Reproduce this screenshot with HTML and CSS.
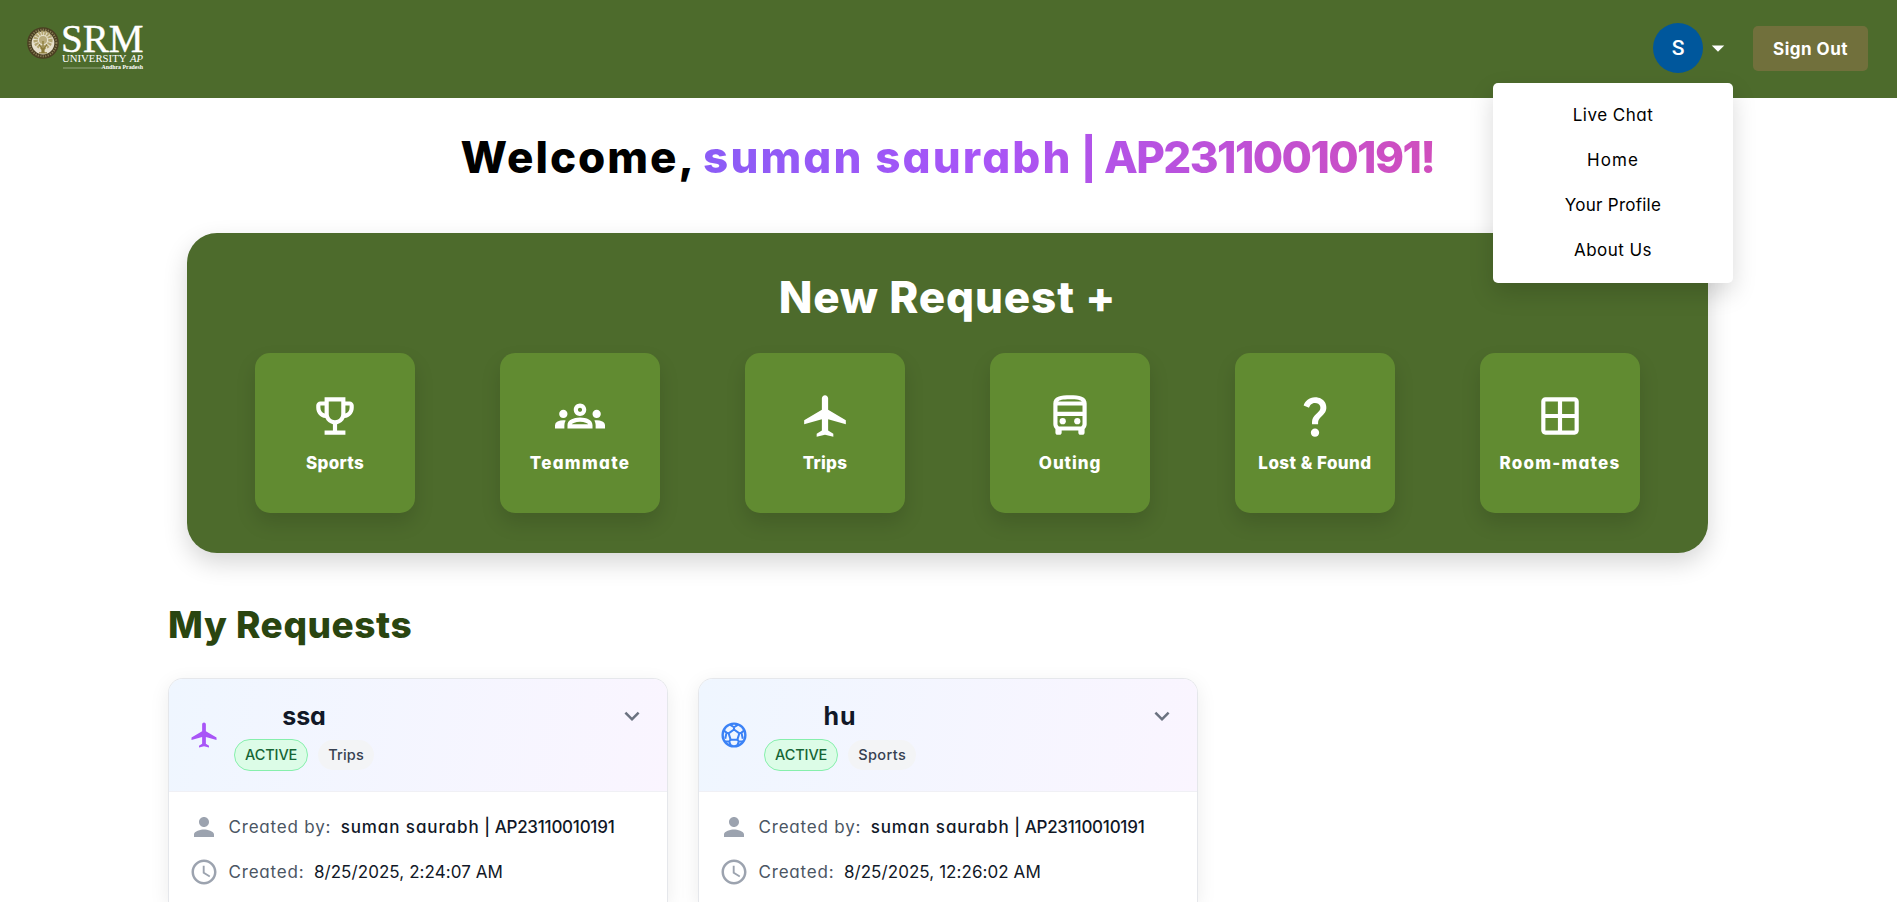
FILE: index.html
```html
<!DOCTYPE html>
<html lang="en">
<head>
<meta charset="utf-8">
<title>Dashboard</title>
<link rel="stylesheet" href="styles.css">
</head>
<body>
<svg class="sprite" aria-hidden="true">
  <symbol id="plane" viewBox="0 0 24 24"><path d="M22 16v-2l-8.5-5V3.5c0-.83-.67-1.5-1.5-1.5s-1.5.67-1.5 1.5V9L2 14v2l8.5-2.5V19L8 20.5V22l4-1 4 1v-1.5L13.5 19v-5.5L22 16z"/></symbol>
  <symbol id="chevron" viewBox="0 0 24 24"><path d="M16.59 8.59 12 13.17 7.41 8.59 6 10l6 6 6-6z"/></symbol>
  <symbol id="person" viewBox="0 0 24 24"><path d="M12 12c2.21 0 4-1.79 4-4s-1.79-4-4-4-4 1.79-4 4 1.79 4 4 4zm0 2c-2.67 0-8 1.34-8 4v2h16v-2c0-2.66-5.33-4-8-4z"/></symbol>
  <symbol id="clock" viewBox="0 0 24 24"><path d="M11.99 2C6.47 2 2 6.48 2 12s4.47 10 9.99 10C17.52 22 22 17.52 22 12S17.52 2 11.99 2zM12 20c-4.42 0-8-3.58-8-8s3.58-8 8-8 8 3.58 8 8-3.58 8-8 8zm.5-13H11v6l5.25 3.15.75-1.23-4.5-2.67z"/></symbol>
</svg>

<header class="topbar">
  <svg class="logo" viewBox="0 0 120 50" width="120" height="50">
    <circle cx="18" cy="19" r="15.8" fill="#4a3f22"/>
    <circle cx="18" cy="19" r="13.4" fill="none" stroke="#8a7d55" stroke-width="2" stroke-dasharray="1.2 1.3"/>
    <circle cx="18" cy="19" r="11.4" fill="#e6e0cb"/>
    <circle cx="18" cy="16" r="7.4" fill="none" stroke="#b3a570" stroke-width="4.4" stroke-dasharray="2 1"/>
    <circle cx="18" cy="16" r="4" fill="#b9ac7c"/>
    <path d="M17 28.5c.5-3 .3-5-3-8M19 28.5c-.5-3-.3-5 3-8M18 29V17M14 28.8h8" fill="none" stroke="#8a7a38" stroke-width="1.3"/>
    <text class="logo-serif logo-srm" x="36" y="28" font-size="40" textLength="82.500" lengthAdjust="spacingAndGlyphs">SRM</text>
    <text class="logo-serif" x="37" y="37.600" font-size="10.800" textLength="64.500" lengthAdjust="spacingAndGlyphs">UNIVERSITY</text>
    <text class="logo-serif" x="105" y="37.600" font-size="10.800" font-style="italic" textLength="13" lengthAdjust="spacingAndGlyphs">AP</text>
    <path d="M38 44h39" stroke="#93a67c" stroke-width="1.2"/>
    <text class="logo-serif" x="76.500" y="45.400" font-size="6.200" font-weight="700" textLength="41.500" lengthAdjust="spacingAndGlyphs">Andhra Pradesh</text>
  </svg>
  <div class="account">
    <div class="avatar">S</div>
    <svg class="caret" viewBox="0 0 24 24"><path d="m7 10 5 5 5-5z"/></svg>
    <button class="signout">Sign Out</button>
    <nav class="menu">
      <a class="ls-chat">Live Chat</a>
      <a class="ls-home">Home</a>
      <a class="ls-profile">Your Profile</a>
      <a class="ls-about">About Us</a>
    </nav>
  </div>
</header>

<main class="page">
  <h1 class="welcome"><span class="hello">Welcome,</span> <span class="name"><span class="person">suman saurabh</span><span class="bar"> | </span><span class="roll">AP23110010191!</span></span></h1>

  <section class="panel">
    <h2 class="panel-title">New Request +</h2>
    <div class="tiles">
      <a class="tile"><svg viewBox="0 0 24 24"><path d="M19 5h-2V3H7v2H5c-1.1 0-2 .9-2 2v1c0 2.550 1.920 4.630 4.390 4.940.63 1.500 1.980 2.630 3.610 2.960V19H7v2h10v-2h-4v-3.100c1.630-.33 2.980-1.460 3.610-2.960C19.080 12.630 21 10.550 21 8V7c0-1.100-.9-2-2-2zM5 8V7h2v3.820C5.840 10.400 5 9.300 5 8zm7 6c-1.650 0-3-1.350-3-3V5h6v6c0 1.650-1.350 3-3 3zm7-6c0 1.300-.84 2.400-2 2.820V7h2v1z"/></svg><span class="ls-sports">Sports</span></a>
      <a class="tile"><svg viewBox="0 0 24 24"><path d="M4 13c1.1 0 2-.9 2-2s-.9-2-2-2-2 .9-2 2 .9 2 2 2zm1.13 1.1c-.37-.06-.74-.1-1.13-.1-.99 0-1.93.21-2.78.58A2.01 2.01 0 0 0 0 16.43V18h4.5v-1.61c0-.83.23-1.61.63-2.29zM20 13c1.1 0 2-.9 2-2s-.9-2-2-2-2 .9-2 2 .9 2 2 2zm4 3.43c0-.81-.48-1.53-1.22-1.85A6.95 6.95 0 0 0 20 14c-.39 0-.76.04-1.13.1.4.68.63 1.46.63 2.29V18H24v-1.57zm-7.76-2.78c-1.17-.52-2.61-.9-4.24-.9-1.63 0-3.07.39-4.24.9A2.988 2.988 0 0 0 6 16.39V18h12v-1.61c0-1.18-.68-2.26-1.76-2.74zM8.07 16c.09-.23.13-.39.91-.69.97-.38 1.99-.56 3.02-.56s2.05.18 3.02.56c.77.3.81.46.91.69H8.07zM12 8c.55 0 1 .45 1 1s-.45 1-1 1-1-.45-1-1 .45-1 1-1m0-2c-1.66 0-3 1.34-3 3s1.34 3 3 3 3-1.34 3-3-1.34-3-3-3z"/></svg><span class="ls-team">Teammate</span></a>
      <a class="tile"><svg><use href="#plane"/></svg><span class="ls-trips">Trips</span></a>
      <a class="tile"><svg viewBox="0 0 24 24"><path d="M12 2c-4.42 0-8 .5-8 4v10c0 .88.39 1.67 1 2.22V20c0 .55.45 1 1 1h1c.55 0 1-.45 1-1v-1h8v1c0 .55.45 1 1 1h1c.55 0 1-.45 1-1v-1.78c.61-.55 1-1.34 1-2.22V6c0-3.5-3.58-4-8-4zm5.66 2.99H6.34C6.89 4.46 8.31 4 12 4s5.11.46 5.66.99zm.34 2V10H6V6.99h12zm-.34 9.74-.29.27H6.63l-.29-.27A.99.99 0 0 1 6 16v-4h12v4c0 .37-.21.62-.34.73z"/><circle cx="8.5" cy="14.5" r="1.5"/><circle cx="15.5" cy="14.5" r="1.5"/></svg><span class="ls-outing">Outing</span></a>
      <a class="tile"><svg viewBox="0 0 24 24"><path d="M11.07 12.85c.77-1.39 2.25-2.21 3.11-3.44.91-1.29.4-3.7-2.18-3.7-1.69 0-2.52 1.28-2.87 2.34L6.54 6.96C7.25 4.83 9.18 3 11.99 3c2.35 0 3.96 1.07 4.78 2.41.7 1.15 1.11 3.3.03 4.9-1.2 1.77-2.35 2.31-2.97 3.45-.25.46-.35.76-.35 2.24h-2.89c-.01-.78-.13-2.05.48-3.15zM14 20c0 1.1-.9 2-2 2s-2-.9-2-2 .9-2 2-2 2 .9 2 2z"/></svg><span class="ls-lost">Lost &amp; Found</span></a>
      <a class="tile"><svg viewBox="0 0 24 24"><path d="M19 3H5c-1.1 0-2 .9-2 2v14c0 1.1.9 2 2 2h14c1.1 0 2-.9 2-2V5c0-1.1-.9-2-2-2zm0 8h-6V5h6v6zm-8-6v6H5V5h6zm-6 8h6v6H5v-6zm8 6v-6h6v6h-6z"/></svg><span class="ls-room">Room-mates</span></a>
    </div>
  </section>

  <section class="requests">
    <h2 class="requests-title">My Requests</h2>
    <div class="cards">
      <article class="card">
        <div class="card-head">
          <svg class="kind trip"><use href="#plane"/></svg>
          <div class="card-info">
            <h3 class="ls-ssa">ssa</h3>
            <div class="badges"><span class="badge active">ACTIVE</span><span class="badge ls-btrips">Trips</span></div>
          </div>
          <svg class="toggle"><use href="#chevron"/></svg>
        </div>
        <div class="card-body">
          <div class="row"><svg><use href="#person"/></svg><span class="label">Created by:</span><span class="value owner"><span class="owner-name">suman saurabh</span> | <span class="owner-roll">AP23110010191</span></span></div>
          <div class="row"><svg><use href="#clock"/></svg><span class="label">Created:</span><span class="value">8/25/2025, 2:24:07 AM</span></div>
        </div>
      </article>
      <article class="card">
        <div class="card-head">
          <svg class="kind sport" viewBox="0 0 24 24"><g fill="none" stroke="currentColor" stroke-width="1.6" stroke-linejoin="round"><circle cx="12" cy="12" r="9.1" stroke-width="1.9"/><path d="m12 7.600 4.300 3.100-1.600 5h-5.400l-1.600-5z"/><path d="M12 7.600V5.800M16.300 10.700l1.700-.6M14.700 15.700l1.100 1.500M9.300 15.700l-1.100 1.500M7.700 10.700 6 10.100M8.700 3.700 12 5.800l3.300-2.100M20.300 8.200 18 10.100l1 4.900M19 17.200h-3.200l-1.200 3.300M5 17.200h3.200l1.200 3.300M3.700 8.200 6 10.100 5 15"/></g></svg>
          <div class="card-info">
            <h3 class="ls-hu">hu</h3>
            <div class="badges"><span class="badge active">ACTIVE</span><span class="badge ls-bsports">Sports</span></div>
          </div>
          <svg class="toggle"><use href="#chevron"/></svg>
        </div>
        <div class="card-body">
          <div class="row"><svg><use href="#person"/></svg><span class="label">Created by:</span><span class="value owner"><span class="owner-name">suman saurabh</span> | <span class="owner-roll">AP23110010191</span></span></div>
          <div class="row"><svg><use href="#clock"/></svg><span class="label">Created:</span><span class="value">8/25/2025, 12:26:02 AM</span></div>
        </div>
      </article>
    </div>
  </section>
</main>
</body>
</html>
```
FILE: styles.css
```css
* { box-sizing: border-box; margin: 0; padding: 0; }

body {
  height: 902px;
  overflow: hidden;
  background: #fff;
  color: #000;
  font-family: Inter, "Open Sans", sans-serif;
  font-size: 17px;
  font-feature-settings: "cv11" 1;
}

svg { display: block; flex: none; fill: currentColor; }
.sprite { position: absolute; width: 0; height: 0; }
span, a, h1, h2, h3 { white-space: nowrap; }

/* Header */
.topbar {
  height: 98px;
  padding: 0 29px 2px 25px;
  display: flex;
  align-items: center;
  justify-content: space-between;
  background: #4d6b2c;
  color: #fff;
}
.logo { overflow: visible; margin-top: 2px; }
.logo-serif { font-family: "Liberation Serif", serif; fill: #fff; }
.logo-srm { stroke: #fff; stroke-width: .4; }
.account { position: relative; display: flex; align-items: center; }
.avatar {
  width: 50px;
  height: 50px;
  border-radius: 50%;
  display: grid;
  place-items: center;
  background: #00579c;
  font: 500 21px Roboto, sans-serif;
}
.caret { width: 30px; height: 30px; }
.signout {
  width: 115px;
  height: 45px;
  margin: 1px 0 0 20px;
  border: 0;
  border-radius: 5px;
  background: #71703c;
  color: #fff;
  font: inherit;
  font-weight: 700;
  letter-spacing: .5px;
}
.menu {
  position: absolute;
  top: 60px;
  right: 135px;
  z-index: 2;
  width: 240px;
  padding: 10px 0;
  border-radius: 5px;
  background: #fff;
  color: #000;
  box-shadow: 0 10px 25px rgba(0, 0, 0, .15);
}
.menu a { display: block; line-height: 45px; text-align: center; }

/* Welcome line */
.welcome {
  display: flex;
  justify-content: center;
  gap: 7px;
  height: 89px;
  padding: 29px 2px 0 0;
  font-size: 44px;
  font-weight: 800;
  line-height: 60px;
}
.hello { letter-spacing: 2px; }
.name {
  background: linear-gradient(90deg, #8b5cf6, #a855f7 38%, #d04ebd);
  -webkit-background-clip: text;
  background-clip: text;
  color: transparent;
}
.person { letter-spacing: 2.100px; }
.bar { letter-spacing: -.8px; white-space: pre; font-weight: 800; font-size: 41px; line-height: 1; }
.roll { letter-spacing: -1.600px; }

/* New request panel */
.panel {
  width: 1521px;
  height: 320px;
  margin: 46px 0 0 187px;
  padding: 34px 68px 0;
  border-radius: 30px;
  background: #4d6b2c;
  color: #fff;
  box-shadow: 0 10px 25px rgba(0, 0, 0, .16);
}
.panel-title {
  font-size: 44px;
  font-weight: 800;
  line-height: 60px;
  letter-spacing: .85px;
  text-align: center;
}
.tiles { display: flex; justify-content: space-between; margin-top: 26px; }
.tile {
  width: 160px;
  height: 160px;
  padding-top: 38px;
  display: flex;
  flex-direction: column;
  align-items: center;
  gap: 10px;
  border-radius: 15px;
  background: #618b31;
  font-weight: 800;
  line-height: 24px;
  box-shadow: 0 10px 20px rgba(0, 0, 0, .13);
}
.tile svg { width: 50px; height: 50px; }

/* Requests */
.requests { padding: 42px 0 0 168px; }
.requests-title {
  color: #2a4510;
  font-size: 37px;
  font-weight: 800;
  line-height: 60px;
  letter-spacing: .55px;
}
.cards { display: flex; gap: 30px; margin-top: 23px; }
.card {
  width: 500px;
  height: 224px;
  border: 1px solid #e5e7eb;
  border-bottom: 0;
  border-radius: 15px 15px 0 0;
  overflow: hidden;
  background: #fff;
  box-shadow: 0 5px 20px rgba(0, 0, 0, .08);
}
.card-head {
  height: 113px;
  padding: 20px 20px 0;
  display: flex;
  background: linear-gradient(100deg, #eff6ff, #faf5ff);
  border-bottom: 1px solid #f0f0f5;
}
.kind { width: 30px; height: 30px; margin-top: 21px; }
.trip { color: #a855f7; }
.sport { color: #3b82f6; }
.card-info { margin-left: 15px; }
.card-info h3 {
  color: #111827;
  font-size: 25px;
  line-height: 34px;
  text-align: center;
}
.badges { display: flex; align-items: center; gap: 10px; margin-top: 6px; }
.badge {
  padding: 0 10px;
  border-radius: 15px;
  background: #f3f4f6;
  color: #374151;
  font-size: 14.500px;
  font-weight: 500;
  line-height: 30px;
}
.active {
  border: 1px solid #86efac;
  border-radius: 16px;
  background: #dcfce7;
  color: #166534;
  letter-spacing: -.1px;
}
.toggle { width: 30px; height: 30px; margin: 2px 0 0 auto; color: #6b7280; }
.card-body { padding: 20px; display: grid; gap: 15px; }
.row { height: 30px; display: flex; align-items: center; gap: 9.500px; color: #111827; }
.row svg { width: 30px; height: 30px; color: #9ca3af; }
.label { color: #4b5563; letter-spacing: .8px; }
.value { letter-spacing: .07px; }
.owner { font-weight: 500; }
.owner-name { letter-spacing: .9px; }
.owner-roll { letter-spacing: -.25px; }

/* Tracking per word */
.ls-chat { letter-spacing: .49px; }
.ls-home { letter-spacing: 1.1px; }
.ls-profile { letter-spacing: .25px; }
.ls-about { letter-spacing: .45px; }
.ls-sports { letter-spacing: .3px; }
.ls-team { letter-spacing: 1.300px; }
.ls-trips { letter-spacing: .25px; }
.ls-outing { letter-spacing: .9px; }
.ls-lost { letter-spacing: .45px; }
.ls-room { letter-spacing: 1.200px; }
.ls-ssa { letter-spacing: -.13px; }
.ls-hu { letter-spacing: 1px; }
.ls-btrips { letter-spacing: .16px; }
.ls-bsports { letter-spacing: .39px; }
```
